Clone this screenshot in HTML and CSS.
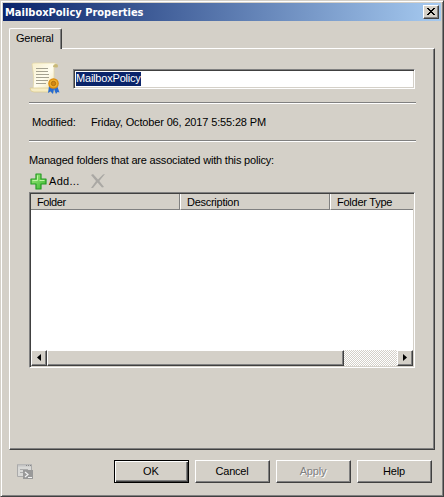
FILE: index.html
```html
<!DOCTYPE html>
<html lang="en">
<head>
<meta charset="utf-8">
<title>MailboxPolicy Properties</title>
<link rel="stylesheet" href="styles.css">
</head>
<body>
<main class="dialog">
  <header class="titlebar">
    <h1 class="title">MailboxPolicy Properties</h1>
    <button class="close" aria-label="Close"><svg width="8" height="7" viewBox="0 0 8 7" shape-rendering="crispEdges"><path d="M0 0h2v1h1v1h2V1h1V0h2v1H7v1H6v1H5v1h1v1h1v1h1v1H6V6H5V5H3v1H2v1H0V6h1V5h1V4h1V3H2V2H1V1H0z"/></svg></button>
  </header>
  <nav class="tabs"><div class="tab"><span class="t-general">General</span></div></nav>
  <section class="panel">
    <div class="identity">
      <svg class="scroll" width="32" height="34" viewBox="0 0 32 34">
        <defs><linearGradient id="paper" x1="0" x2="1" y1="0" y2="1"><stop stop-color="#f8efca"/><stop offset=".5" stop-color="#fffdf0"/><stop offset="1" stop-color="#eee0ad"/></linearGradient></defs>
        <path d="M3 2Q4 .7 7 1h18q3 .2 3 2.500Q28 5 25 4.800V27L4 28Q6 16 3 2Z" fill="url(#paper)" stroke="#e5d8a5" stroke-width=".7"/>
        <path d="M24 5q0-3 3-3 2 0 2 2t-2 1.500" fill="#c9b978"/>
        <path d="M1 26h19q2 3 6 4H5q-4 0-4-4Z" fill="#f6ecc4" stroke="#d9c88c" stroke-width=".7"/>
        <path d="M7 6.500h12M7 9.500h12M7 12.500h13M7 15.500h13M7 18.500h12M7 21.500h10" stroke="#a5a291" stroke-width="1"/>
        <path d="M20 24l-1 7 2.500-1.500L24 32l1-5 2 5 1.500-2 2 .5-2.500-7Z" fill="#286bcf"/>
        <circle cx="24.500" cy="21.500" r="5.300" fill="#d98a0c"/>
        <circle cx="24.500" cy="21.500" r="4" fill="#f0ae2b"/>
        <circle cx="24.500" cy="21.500" r="2.200" fill="#d48812" stroke="#9d660c" stroke-width=".7"/>
      </svg>
      <div class="field"><span class="selected">MailboxPolicy</span></div>
    </div>
    <div class="rule"></div>
    <div class="modified"><span class="t-label">Modified:</span><span class="t-date">Friday, October 06, 2017 5:55:28 PM</span></div>
    <div class="rule"></div>
    <p class="caption"><span class="t-caption">Managed folders that are associated with this policy:</span></p>
    <div class="toolbar">
      <svg width="17" height="17" viewBox="0 0 17 17"><defs><linearGradient id="plus" x2="1" y2="1"><stop stop-color="#a5ec83"/><stop offset="1" stop-color="#36b52b"/></linearGradient></defs><path d="M6 1h5v5h5v5h-5v5H6v-5H1V6h5Z" fill="url(#plus)" stroke="#249b22" stroke-width="1.200" stroke-linejoin="round"/><path d="M7.500 2.500v5h-5M9.500 7.500h5" fill="none" stroke="#bdf5a2" stroke-width="1"/></svg>
      <span class="t-add">Add...</span>
      <svg class="remove" width="16" height="16" viewBox="0 0 16 16"><path d="M1 2l2-1 5 5.500 5-5 2-.5-5.700 7L14 14l-2 .5L7.500 9.500 3 15H1l5-7Z" fill="#aaa8a4"/></svg>
    </div>
    <div class="list">
      <div class="columns">
        <div class="column"><span class="t-folder">Folder</span></div>
        <div class="column"><span class="t-desc">Description</span></div>
        <div class="column"><span class="t-type">Folder Type</span></div>
      </div>
      <div class="rows"></div>
      <div class="scrollbar">
        <div class="arrow"><svg width="4" height="7" viewBox="0 0 4 7"><path d="M4 0v7L0 3.500Z"/></svg></div>
        <div class="thumb"></div>
        <div class="track"></div>
        <div class="arrow"><svg width="4" height="7" viewBox="0 0 4 7"><path d="M0 0v7l4-3.500Z"/></svg></div>
      </div>
    </div>
  </section>
  <footer class="actions">
    <svg class="script-icon" width="17" height="17" viewBox="0 0 17 17"><path d="M.5 1.500h14v12H.5Z" fill="#d9d9d7" stroke="#aaa"/><path d="M1 2.500h13" stroke="#c4c4c4" stroke-width="2"/><path d="M9 2.500h1m1 0h1m1 0h1" stroke="#888"/><path d="M3 6.500h8M3 9.500h4" stroke="#aaa"/><path d="M6 7h10v9H6Z" fill="#999"/><path d="M8 9l3 2.500L8 14M11 14.500h4" fill="none" stroke="#f2f2f2" stroke-width="1.200"/></svg>
    <button class="button default"><span class="t-ok">OK</span></button>
    <button class="button"><span class="t-cancel">Cancel</span></button>
    <button class="button disabled" disabled><span class="t-apply">Apply</span></button>
    <button class="button"><span class="t-help">Help</span></button>
  </footer>
</main>
</body>
</html>
```
FILE: styles.css
```css
* { box-sizing: border-box; }
body { margin: 0; background: #d4d0c8; color: #000; font: 11px/14px "Liberation Sans", sans-serif; }
svg { display: block; flex: none; }
span { white-space: nowrap; }
.dialog { width: 444px; height: 497px; padding: 1px; display: flex; flex-direction: column; border: 1px solid; border-color: #d4d0c8 #404040 #404040 #d4d0c8; box-shadow: inset 1px 1px #fff, inset -1px -1px #808080; }
.titlebar { margin: 1px 1px 0; height: 18px; flex: none; display: flex; align-items: center; justify-content: space-between; padding: 0 2px; background: linear-gradient(90deg, #0a246a, #a6caf0); }
.title { margin: 0; padding-top: 1px; color: #fff; font: bold 11px/17px "DejaVu Sans Condensed", "DejaVu Sans", sans-serif; white-space: nowrap; }
.close, .button, .arrow, .thumb { background: #d4d0c8; border: 1px solid; border-color: #fff #404040 #404040 #fff; box-shadow: inset -1px -1px #808080; border-radius: 0; }
.close { width: 16px; height: 14px; padding: 0 1px 1px 0; display: grid; place-items: center; }
.tabs { height: 27px; padding: 7px 0 0 7px; flex: none; }
.tab { position: relative; width: 53px; height: 21px; padding: 2px 6px; background: #d4d0c8; border: 1px solid; border-color: #fff #404040 transparent #fff; border-bottom: 0; border-radius: 2px 2px 0 0; box-shadow: inset -1px 0 #808080; }
.panel { margin-left: 7px; width: 426px; height: 402px; flex: none; padding: 13px 18px 0 19px; border: 1px solid; border-color: #fff #404040 #404040 #fff; box-shadow: inset -1px -1px #808080; }
.identity { display: flex; height: 40px; }
.scroll { margin: 0 12px 0 0; }
.field { margin-top: 7px; width: 342px; height: 20px; padding: 1px; background: #fff; border: 1px solid; border-color: #808080 #fff #fff #808080; box-shadow: inset 1px 1px #404040, inset -1px -1px #d4d0c8; }
.selected { display: block; width: 65px; height: 14px; margin: 1px; background: #0a246a; color: #fff; line-height: 13px; letter-spacing: -0.2px; }
.rule { height: 2px; border-top: 1px solid #808080; border-bottom: 1px solid #fff; }
.modified { height: 36px; padding: 11px 0 0 3px; display: grid; grid-template-columns: 59px 1fr; }
.caption { margin: 0; height: 29px; padding-top: 11px; }
.toolbar { display: flex; height: 21px; align-items: center; padding: 0 0 1px 1px; }
.t-general { letter-spacing: -0.25px; }
.t-label { letter-spacing: -0.1px; }
.t-date { letter-spacing: -0.15px; }
.t-caption { letter-spacing: -0.19px; }
.t-folder { letter-spacing: -0.4px; }
.t-desc { letter-spacing: -0.27px; }
.t-type { letter-spacing: -0.25px; }
.t-cancel, .t-apply, .t-help { letter-spacing: -0.2px; }
.t-add { width: 41px; margin-left: 2px; letter-spacing: 0.3px; }
.list { width: 386px; height: 176px; padding: 1px; display: flex; flex-direction: column; background: #fff; border: 1px solid; border-color: #808080 #fff #fff #808080; box-shadow: inset 1px 1px #404040, inset -1px -1px #d4d0c8; }
.columns { display: grid; grid-template-columns: 149px 150px 1fr; height: 16px; }
.column { padding: 2px 0 0 6px; line-height: 13px; background: #d4d0c8; border-bottom: 1px solid #808080; border-right: 1px solid #808080; border-left: 1px solid #fff; }
.column:first-child { border-left: 0; }
.column:last-child { border-right: 0; }
.rows { flex: 1; }
.scrollbar { height: 16px; display: flex; }
.arrow { width: 16px; display: grid; place-items: center; padding: 0 1px 1px 0; }
.thumb { width: 297px; }
.track { flex: 1; background: repeating-conic-gradient(#d4d0c8 0 25%, #fff 0 50%) 0 0 / 2px 2px; }
.actions { display: flex; padding: 10px 0 0 15px; gap: 6px; }
.script-icon { margin: 3px 74px 0 0; }
.button { width: 75px; height: 23px; padding: 0 1px 1px 0; color: #000; font: 11px/14px "Liberation Sans", sans-serif; }
.default { border-color: #000; box-shadow: inset 1px 1px #fff, inset -1px -1px #404040, inset -2px -2px #808080; }
.disabled { color: #808080; text-shadow: 1px 1px #fff; }
```
